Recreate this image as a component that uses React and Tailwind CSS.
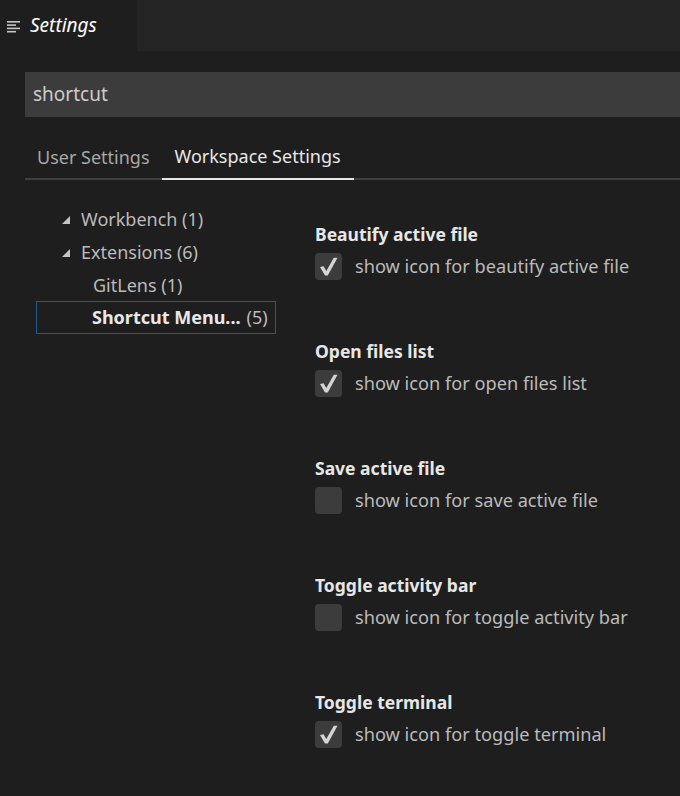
import React from "react";

const font = { fontFamily: '"Noto Sans", "Open Sans", sans-serif' };

function Check({ checked }) {
  return (
    <div className="w-[27px] h-[27px] rounded-[4px] bg-[#3c3c3c] flex items-center justify-center shrink-0">
      {checked && (
        <svg width="27" height="27" viewBox="0 0 27 27">
          <path d="M5 14 L8.6 13.2 L11.3 18 L18.8 4.8 L22.5 4.8 L12.8 22.5 L10 22.5 Z" fill="#d4d4d4" />
        </svg>
      )}
    </div>
  );
}

const settings = [
  { title: "Beautify active file", desc: "show icon for beautify active file", checked: true },
  { title: "Open files list", desc: "show icon for open files list", checked: true },
  { title: "Save active file", desc: "show icon for save active file", checked: false },
  { title: "Toggle activity bar", desc: "show icon for toggle activity bar", checked: false },
  { title: "Toggle terminal", desc: "show icon for toggle terminal", checked: true },
];

function Tri() {
  return (
    <svg width="10" height="10" viewBox="0 0 10 10" className="shrink-0">
      <path d="M9 1 L9 9 L1 9 Z" fill="#c5c5c5" />
    </svg>
  );
}

export default function App() {
  return (
    <div className="w-[680px] h-[796px] bg-[#1e1e1e] overflow-hidden" style={font}>
      {/* tab bar */}
      <div className="h-[51px] bg-[#252526] flex">
        <div className="w-[137px] h-full bg-[#1e1e1e] flex items-center">
          <svg width="14" height="14" viewBox="0 0 14 14" className="ml-[7px]">
            <rect x="0" y="2" width="13" height="1.6" fill="#c5c5c5" />
            <rect x="0" y="5.3" width="9" height="1.6" fill="#c5c5c5" />
            <rect x="0" y="8.6" width="13" height="1.6" fill="#c5c5c5" />
            <rect x="0" y="11.9" width="9" height="1.6" fill="#c5c5c5" />
          </svg>
          <span className="ml-[9px] italic text-[19px] text-white leading-none">Settings</span>
        </div>
      </div>

      {/* search */}
      <div className="mt-[21px] ml-[25px] h-[45px] bg-[#3c3c3c] flex items-center pl-[8px]">
        <span className="text-[19px] text-[#cccccc]">shortcut</span>
      </div>

      {/* tabs */}
      <div className="ml-[25px] mt-[18px] flex border-b-2 border-[#3f3f3f] h-[45px]">
        <div className="px-3 flex items-center text-[18px] text-[#a8a8a8] -mb-[2px]">User Settings</div>
        <div className="px-[13px] flex items-center text-[18px] text-[#e7e7e7] border-b-2 border-[#e7e7e7] -mb-[2px]">
          Workspace Settings
        </div>
      </div>

      {/* body */}
      <div className="flex">
        <div className="ml-[36px] w-[240px] pt-[23px] text-[18px] text-[#bbbbbb]">
          <div className="h-[33px] flex items-center pl-[25px]">
            <Tri />
            <span className="ml-[10px]">Workbench (1)</span>
          </div>
          <div className="h-[33px] flex items-center pl-[25px]">
            <Tri />
            <span className="ml-[10px]">Extensions (6)</span>
          </div>
          <div className="h-[33px] flex items-center pl-[57px]">GitLens (1)</div>
          <div className="h-[33px] -mt-[1px] flex items-center pl-[55px] border border-[#1b5d8e] whitespace-nowrap">
            <span className="font-bold text-[#e8e8e8]">Shortcut Menu...</span>
            <span className="ml-[6px]">(5)</span>
          </div>
        </div>

        <div className="ml-[39px] pt-[42px]">
          {settings.map((s) => (
            <div key={s.title} className="h-[117px]">
              <div className="h-[24px] flex items-center text-[17.5px] font-bold text-[#e7e7e7]">{s.title}</div>
              <div className="mt-[7px] flex items-center">
                <Check checked={s.checked} />
                <span className="ml-[13px] text-[18.2px] text-[#bbbbbb] whitespace-nowrap">{s.desc}</span>
              </div>
            </div>
          ))}
        </div>
      </div>
    </div>
  );
}
